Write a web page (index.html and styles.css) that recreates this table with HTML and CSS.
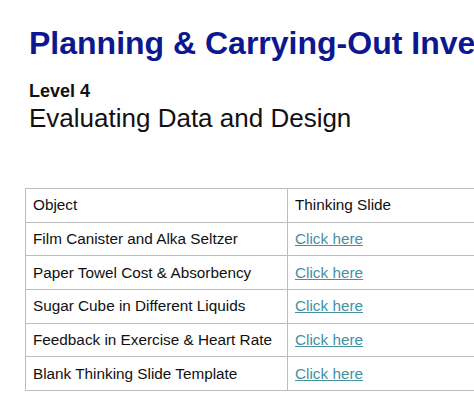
FILE: index.html
```html
<!DOCTYPE html>
<html>
<head>
<meta charset="utf-8">
<link rel="stylesheet" href="styles.css">
</head>
<body>
<div class="page">
  <h1 class="title">Planning &amp; Carrying-Out Investigations</h1>
  <h2 class="level">Level 4</h2>
  <p class="subtitle">Evaluating Data and Design</p>
  <table class="slides">
    <tr><td class="c1">Object</td><td class="c2">Thinking Slide</td></tr>
    <tr><td class="c1">Film Canister and Alka Seltzer</td><td class="c2"><a href="#">Click here</a></td></tr>
    <tr><td class="c1">Paper Towel Cost &amp; Absorbency</td><td class="c2"><a href="#">Click here</a></td></tr>
    <tr><td class="c1">Sugar Cube in Different Liquids</td><td class="c2"><a href="#">Click here</a></td></tr>
    <tr><td class="c1">Feedback in Exercise &amp; Heart Rate</td><td class="c2"><a href="#">Click here</a></td></tr>
    <tr><td class="c1">Blank Thinking Slide Template</td><td class="c2"><a href="#">Click here</a></td></tr>
  </table>
</div>
</body>
</html>
```
FILE: styles.css
```css
html, body {
  margin: 0;
  padding: 0;
  background: #fff;
  overflow: hidden;
}
.page {
  width: 474px;
  height: 405px;
  overflow: hidden;
  font-family: "Liberation Sans", Arial, sans-serif;
  color: #111;
  padding: 0 0 0 29px;
  box-sizing: border-box;
}
.title {
  margin: 0;
  padding-top: 23px;
  font-size: 32px;
  line-height: 40px;
  font-weight: bold;
  color: #0c1790;
  white-space: nowrap;
}
.level {
  margin: 0;
  padding-top: 17px;
  font-size: 18px;
  line-height: 22px;
  font-weight: bold;
  color: #111;
}
.subtitle {
  margin: 0;
  padding-top: 1px;
  font-size: 26px;
  line-height: 30px;
  color: #111;
}
.slides {
  margin: 55px 0 0 -4px;
  border-collapse: collapse;
  width: 520px;
  font-size: 15.3px;
}
.slides td {
  border: 1px solid #bdbdbd;
  height: 33.7px;
  padding: 0 7px;
  box-sizing: border-box;
  vertical-align: middle;
  white-space: nowrap;
}
.slides .c1 {
  width: 262px;
}
.slides a {
  color: #4590a2;
  text-decoration: underline;
}
```
